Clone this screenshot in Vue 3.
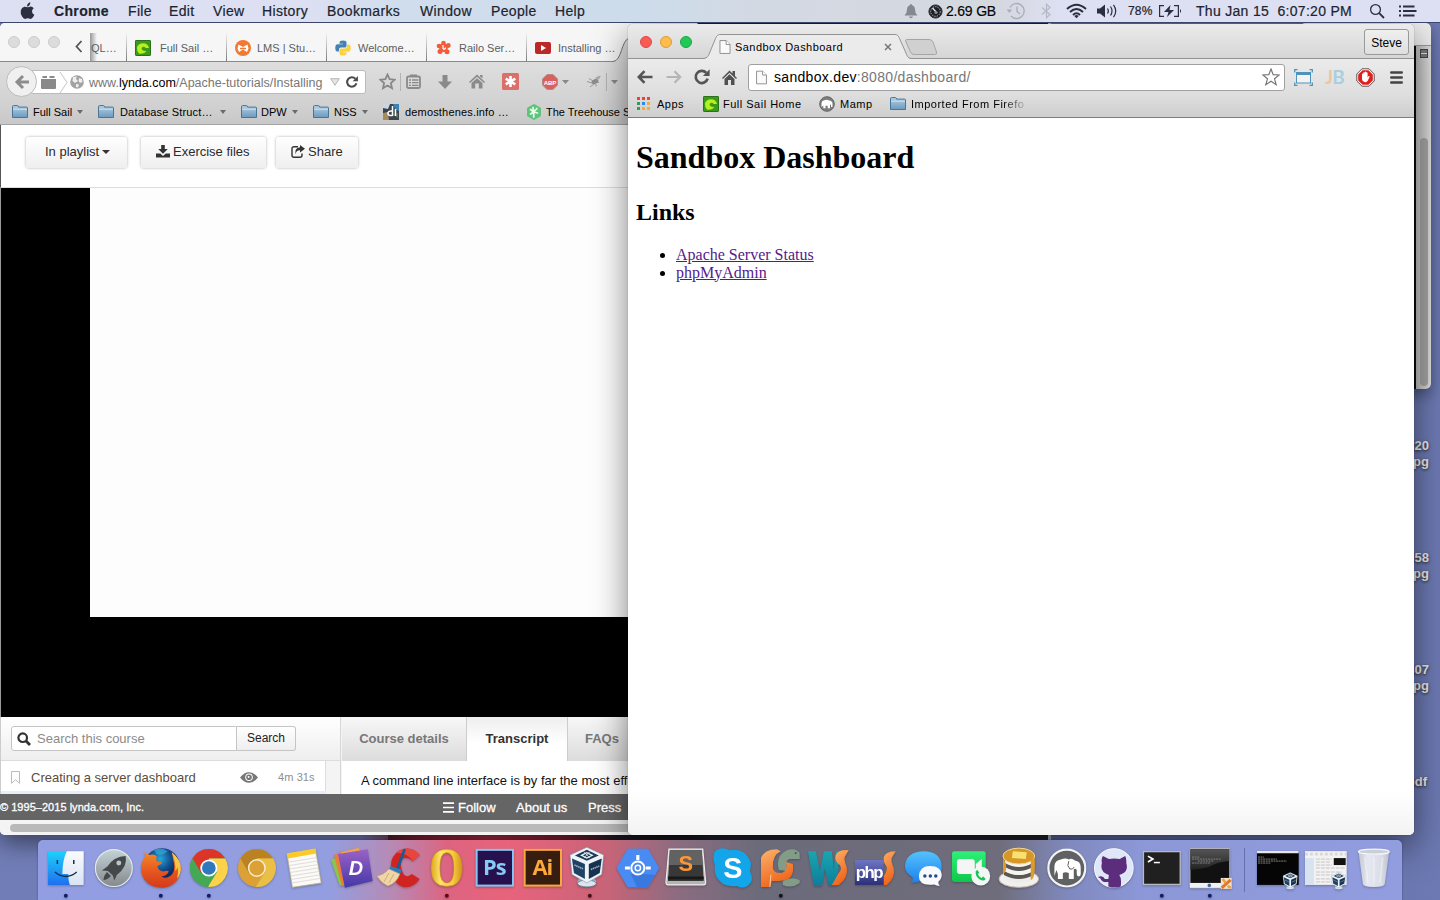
<script setup>
const menus = ['File', 'Edit', 'View', 'History', 'Bookmarks', 'Window', 'People', 'Help']
const files = [
  { id: 1, a: '820', b: 'jpg' },
  { id: 2, a: '958', b: 'jpg' },
  { id: 3, a: '307', b: 'jpg' },
]
</script>

<template>
  <div class="desktop">
    <svg width="0" height="0" class="defs">
      <defs>
        <linearGradient id="gFolder" x2="0" y2="1"><stop offset="0" stop-color="#b5d0e4" /><stop offset="1" stop-color="#6b9abf" /></linearGradient>
        <linearGradient id="gSilver" x2="0" y2="1"><stop offset="0" stop-color="#c3d3d7" /><stop offset="1" stop-color="#85898c" /></linearGradient>
        <linearGradient id="gFinder" x2="0" y2="1"><stop offset="0" stop-color="#1cd2fb" /><stop offset="1" stop-color="#1f6ff0" /></linearGradient>
        <linearGradient id="gFinder2" x2="0" y2="1"><stop offset="0" stop-color="#fafbfd" /><stop offset="1" stop-color="#d9e4f3" /></linearGradient>
        <radialGradient id="gGlobe" cx=".45" cy=".3"><stop offset="0" stop-color="#25a8dc" /><stop offset=".6" stop-color="#14508f" /><stop offset="1" stop-color="#0c2a5c" /></radialGradient>
        <linearGradient id="gFox" x2="0" y2="1"><stop offset="0" stop-color="#f58a25" /><stop offset=".6" stop-color="#e4521f" /><stop offset="1" stop-color="#d33a1b" /></linearGradient>
        <linearGradient id="gDash" x2="0" y2="1"><stop offset="0" stop-color="#9b62c6" /><stop offset="1" stop-color="#4338a8" /></linearGradient>
        <linearGradient id="gOpera"><stop offset="0" stop-color="#e0a520" /><stop offset=".3" stop-color="#fce463" /><stop offset=".7" stop-color="#f6cd3c" /><stop offset="1" stop-color="#d3921a" /></linearGradient>
        <linearGradient id="gOrange" x2=".4" y2="1"><stop offset="0" stop-color="#fbb36c" /><stop offset="1" stop-color="#f0651a" /></linearGradient>
        <linearGradient id="gTeal" x2="0" y2="1"><stop offset="0" stop-color="#1aa5b0" /><stop offset="1" stop-color="#0d7d9c" /></linearGradient>
        <linearGradient id="gMsg" x2="0" y2="1"><stop offset="0" stop-color="#56c2fb" /><stop offset="1" stop-color="#1b82f0" /></linearGradient>
        <linearGradient id="gFace" x2="0" y2="1"><stop offset="0" stop-color="#30f07a" /><stop offset="1" stop-color="#0cc84a" /></linearGradient>
        <linearGradient id="gPhp" x2="0" y2="1"><stop offset="0" stop-color="#6e76c4" /><stop offset="1" stop-color="#2b2f78" /></linearGradient>
        <linearGradient id="gTrash"><stop offset="0" stop-color="#c9ccd6" /><stop offset=".3" stop-color="#eef0f4" /><stop offset=".75" stop-color="#e2e4ea" /><stop offset="1" stop-color="#c0c4cf" /></linearGradient>
        <linearGradient id="gScreen" x2="0" y2="1"><stop offset="0" stop-color="#555" /><stop offset="1" stop-color="#222" /></linearGradient>
        <symbol id="folder" viewBox="0 0 16 14">
          <path d="M.5 12.5V1.6Q.5.6 1.5.6H5.6Q6.4.6 6.6 2.1H14.5Q15.5 2.1 15.5 3V12.5Z" fill="url(#gFolder)" stroke="#4a7394" />
          <path d="M1 4.2H15" stroke="#d5e5f0" stroke-width=".9" />
        </symbol>
        <symbol id="fs" viewBox="0 0 16 16">
          <rect width="16" height="16" rx="1.4" fill="#3a9a1d" /><rect x=".5" y=".5" width="15" height="15" rx="1" fill="none" stroke="#2d7018" />
          <path d="M4 13.600Q1.600 11 2 7.500Q3 3.500 8 3.300Q13 3.500 14 8H10.600Q9.500 6.300 7.600 6.900Q5.600 8.300 7.600 10.200Q9 11.300 11.500 10.900Q9 14.500 4 13.600Z" fill="#b6f01e" />
        </symbol>
        <symbol id="elephant" viewBox="0 0 40 40">
          <circle cx="20" cy="20" r="18.600" fill="#5f6163" stroke="#f3f3f3" stroke-width="2.200" />
          <path d="M7.500 28V18Q8 12.500 14 11.500Q19 9.500 22 11.500Q25 9.500 28 12.500Q34 13 34 20V26Q34 28.500 32 28.500Q30 28.500 30 26V22Q28.500 20 27 21.500V31H22V25Q18.500 23.500 16 25V31H11V26L9.500 22Z" fill="#fff" />
          <path d="M22 13Q19.600 18 23 21Q26 22 27.500 19" fill="none" stroke="#5f6163" stroke-width="1" />
        </symbol>
        <symbol id="mamp" viewBox="0 0 16 16">
          <circle cx="8" cy="8" r="7.300" fill="#7d7d7d" stroke="#666" />
          <path d="M2.500 11V7Q2.800 4.500 5.500 4.300Q8 3.300 10 4.500Q13.300 4.800 13.500 7.500V11H12V8.800L11 8.600V12.300H8.700V9.800H6.500V12.300H4.300V9.500Z" fill="#fff" />
        </symbol>
        <symbol id="vbox" viewBox="0 0 36 42">
          <ellipse cx="18" cy="35.500" rx="9.500" ry="4" fill="#9fb0c4" /><ellipse cx="18" cy="37.600" rx="9.500" ry="3.400" fill="#dce5ee" stroke="#53687f" stroke-width=".7" />
          <path d="M1 9 18 1 35 9 33 28.500 18 37 3 28.500Z" fill="#eef3f8" stroke="#8496ab" stroke-width=".6" />
          <path d="M6 9.300 18 3.600 30 9.300 18 14.800Z" fill="#1d3a58" /><path d="M12.500 9.200 18 6.500 23.500 9.200 18 12Z" fill="none" stroke="#e8eef5" stroke-width="1.300" /><path d="M15 5.500 21 12M21 5.500 15 12" stroke="#dfe8f0" stroke-width=".8" />
          <path d="M3 12.500 16 18V33L5 27Z" fill="#1f4264" /><path d="M33 12.500 20 18V33L31 27Z" fill="#17324e" />
          <path d="M5.500 19 14.500 23M22 23.500 30.500 20" stroke="#9fb2c6" stroke-width="1.600" stroke-dasharray="1.500 .5" />
        </symbol>
        <symbol id="reload" viewBox="0 0 16 16">
          <path d="M13 9.500A5.400 5.400 0 1 1 11.800 4.300" fill="none" stroke="currentColor" stroke-width="2.400" /><path d="M14.800 1.200V7.200H8.800Z" fill="currentColor" />
        </symbol>
        <symbol id="page" viewBox="0 0 12 15">
          <path d="M.6.6H7.200L11.400 4.800V14.400H.6Z" fill="#fafafa" stroke="#8b8b8b" /><path d="M7.200.6V4.800H11.400" fill="#fff" stroke="#8b8b8b" />
        </symbol>
      </defs>
    </svg>

    <header class="menubar">
      <svg width="15" height="18" viewBox="0 0 15 18"><path d="M10.300.3Q10.500 2 9.400 3.200Q8.400 4.500 7 4.400Q6.900 2.900 7.900 1.700Q8.900.5 10.300.3ZM7.600 5.300Q8.200 5.300 9 4.900Q12 3.800 13.700 6.300Q11.900 7.500 12 9.500Q12.100 11.700 14.300 12.700Q13.700 14.200 12.700 15.600Q11.700 17 10.500 17Q9.800 17 9.100 16.600Q7.700 16.100 6.500 16.600Q3.900 18 2.100 14.600Q.2 11.600.8 8.600Q1.500 5.400 4.300 4.800Q5.300 4.700 6.400 5.100Z" fill="#2b2f40" /></svg>
      <b>Chrome</b>
      <span v-for="m in menus" :key="m">{{ m }}</span>
      <svg width="16" height="16" viewBox="0 0 16 16"><path d="M8 1Q9 1 9 2.300Q12 3 12 6.500Q12 10.500 14.500 12.600H1.500Q4 10.500 4 6.500Q4 3 7 2.300Q7 1 8 1ZM6 13.600H10Q9.500 15.200 8 15.200Q6.500 15.200 6 13.600Z" fill="#85888f" /></svg>
      <svg width="15" height="15" viewBox="0 0 15 15"><circle cx="7.500" cy="7.500" r="6.600" fill="#1d1f25" stroke="#33363d" /><circle cx="7.500" cy="7.500" r="4.800" fill="none" stroke="#b9bdc6" stroke-width="1" stroke-dasharray="1.400 1" /><path d="M4.500 4 9 9" stroke="#e6e8ee" stroke-width="1.300" /><circle cx="8" cy="8.500" r="1.600" fill="#858992" /></svg>
      <span class="mem">2.69 GB</span>
      <svg width="20" height="18" viewBox="0 0 20 18" fill="none" stroke="#a9adb7" stroke-width="1.300"><path d="M4 5.500A7.500 7.500 0 1 1 5 14M11 4.500V9.500L14 12" /><path d="M.5 7.500 3.500 11 6 7.500Z" fill="#a9adb7" stroke="none" /></svg>
      <svg width="13" height="16" viewBox="0 0 13 16" fill="none" stroke="#b4b8c4" stroke-width="1.200"><path d="M2 4.500 10 11.500 6.500 14.800V1.200L10 4.500 2 11.500" /></svg>
      <svg width="21" height="16" viewBox="0 0 21 16" fill="none" stroke="#2a2e3f" stroke-width="2"><path d="M1 6Q10.500-2.600 20 6M4 9Q10.500 3 17 9M7 12Q10.500 8.600 14 12" /><path d="M8.300 13 10.500 15.300 12.700 13Q10.500 11.200 8.300 13Z" fill="#2a2e3f" stroke="none" /></svg>
      <svg width="23" height="16" viewBox="0 0 23 16" fill="none" stroke="#2a2e3f" stroke-width="1.200"><path d="M1 5.500H4L9 1.500V14.500L4 10.500H1Z" fill="#2a2e3f" stroke="none" /><path d="M11.500 5.500Q13.300 8 11.500 10.500M14.500 3.500Q17.500 8 14.500 12.500M17.500 1.800Q22 8 17.500 14.200" /></svg>
      <span class="pct">78%</span>
      <svg width="24" height="14" viewBox="0 0 24 14"><path d="M6 1.700H1.600V12.300H6M16 1.700H20.400V12.300H16" fill="none" stroke="#2a2e3f" stroke-width="1.200" /><path d="M22 5Q24.200 7 22 9Z" fill="#2a2e3f" /><path d="M12.500 1 6 8H10.500L9 13 16 6H11.500Z" fill="#2a2e3f" /></svg>
      <span class="date">Thu Jan 15&nbsp; 6:07:20 PM</span>
      <svg width="16" height="16" viewBox="0 0 16 16" fill="none" stroke="#2a2e3f" stroke-width="1.300"><circle cx="6.500" cy="6.500" r="4.900" /><path d="M10.200 10.200 15 15" stroke-width="1.800" /></svg>
      <svg width="19" height="12" viewBox="0 0 19 12" stroke="#2a2e3f" stroke-width="1.800"><path d="M1 1.500H3M1 6H3M1 10.500H3M5 1.500H16.500M5 6H18.500M5 10.500H16.500" /></svg>
    </header>

    <section class="files">
      <p v-for="f in files" :key="f.id">{{ f.a }}<br />{{ f.b }}</p>
      <p class="pdf">pdf</p>
    </section>

    <!-- window peeking out behind Chrome -->
    <section class="backwin">
      <div class="bw-top"></div>
      <div class="bw-body">
        <div class="bw-col"><i class="bw-btn"></i><i class="bw-thumb"></i></div>
      </div>
    </section>

    <section class="firefox">
      <div class="ff-tabs">
        <div class="lights grey"><i></i><i></i><i></i></div>
        <svg class="ff-prev" width="8" height="13" viewBox="0 0 8 13" fill="none" stroke="#555" stroke-width="1.800"><path d="M6.500 1 1.500 6.500 6.500 12" /></svg>
        <div class="ff-tab cut">QL…</div>
        <div class="ff-tab t1"><svg width="16" height="16"><use href="#fs" /></svg>Full Sail …</div>
        <div class="ff-tab t2"><svg width="16" height="16" viewBox="0 0 16 16"><circle cx="8" cy="8" r="8" fill="#f07a32" /><path d="M3.500 4.500 8 7 12.500 4.500 13.500 8.500 12 12 8 9.500 4 12 2.500 8.500Z" fill="#fff" /><path d="M5 8.500H11" stroke="#f07a32" stroke-width="1.400" /></svg>LMS | Stu…</div>
        <div class="ff-tab t3"><svg width="16" height="16" viewBox="0 0 16 16"><path d="M8 .5Q11.500.5 11.500 2.500V6Q11.500 7.500 9.800 7.500H6Q4 7.500 4 9.500V11.500H2.300Q.3 11.500.3 8Q.3 4.300 2.500 4.300H8V3.700H4.500V2.500Q4.500.5 8 .5Z" fill="#4482b4" /><path d="M8 15.500Q4.500 15.500 4.500 13.500V10Q4.500 8.500 6.200 8.500H10Q12 8.500 12 6.500V4.500H13.700Q15.700 4.500 15.700 8Q15.700 11.700 13.500 11.700H8V12.300H11.500V13.500Q11.500 15.500 8 15.500Z" fill="#fbd33f" /></svg>Welcome…</div>
        <div class="ff-tab t4"><svg width="15" height="15" viewBox="0 0 15 15"><g fill="#f25c38"><circle cx="7.500" cy="3" r="2.300" /><circle cx="3" cy="6" r="2.300" /><circle cx="4" cy="11.500" r="2.500" /><circle cx="11" cy="11.700" r="2.500" /><circle cx="12.300" cy="5.500" r="2.400" /><circle cx="7.500" cy="7.700" r="4.400" /></g><path d="M7 5V9M7 9Q9.500 9.500 9.500 7.500" stroke="#fff" fill="none" stroke-width="1.200" /></svg>Railo Ser…</div>
        <div class="ff-tab t5"><svg width="16" height="12" viewBox="0 0 16 12"><rect width="16" height="12" rx="2" fill="#bb2826" /><path d="M6 3 11 6 6 9Z" fill="#fff" /></svg>Installing …</div>
        <svg class="ff-curve" width="24" height="26" viewBox="0 0 24 26"><path d="M0 24.500C9 24 8 4 16 1V0H24V26H0Z" fill="#dfdfdf" /><path d="M0 24.500C9 24 8 4 16 1" fill="none" stroke="#777" /></svg>
      </div>

      <div class="ff-bar">
        <span class="ff-back"><svg width="16" height="16" viewBox="0 0 16 16" fill="none" stroke="#8c8c8c" stroke-width="3"><path d="M9 2 3 8 9 14M3.500 8H15" /></svg></span>
        <div class="ff-url">
          <svg width="15" height="14" viewBox="0 0 15 14"><path d="M0 4H15V13Q15 14 14 14H1Q0 14 0 13ZM1.500 1H6V3H1.500ZM8.500 1H13.500V3H8.500Z" fill="#8a8a8a" /></svg>
          <svg width="9" height="23" viewBox="0 0 9 23" fill="none" stroke="#c4c4c4"><path d="M1 1 8 11.500 1 22" /></svg>
          <svg width="14" height="14" viewBox="0 0 14 14"><circle cx="7" cy="7" r="6.800" fill="#a2a2a2" /><path d="M3 2 7 1.500 6 4 8 6 5 8 2.500 6ZM9 3 12 4 12.500 7 10 8 8.500 6ZM6 9 9 9.500 8 12.500 6 12Z" fill="#efefef" /></svg>
          <span class="ff-addr">www.<b>lynda.com</b>/Apache-tutorials/Installing</span>
          <svg width="10" height="8" viewBox="0 0 10 8"><path d="M.7.700H9.300L5 7.300Z" fill="#e4e4e4" stroke="#b6b6b6" /></svg>
          <svg class="ff-rel" width="14" height="14"><use href="#reload" /></svg>
        </div>
        <svg width="17" height="17" viewBox="0 0 17 17"><path d="M8.500 1.500 10.600 6.200 15.700 6.700 11.900 10.100 13 15.200 8.500 12.500 4 15.200 5.100 10.100 1.300 6.700 6.400 6.200Z" fill="none" stroke="#888" stroke-width="1.800" /></svg>
        <i class="ff-sep"></i>
        <svg width="15" height="15" viewBox="0 0 15 15"><path d="M4 2.500V.5H11V2.500" fill="#8a8a8a" /><rect x="1" y="2.500" width="13" height="11.500" rx="1.500" fill="none" stroke="#8a8a8a" stroke-width="1.800" /><path d="M3 6H5M6 6H12.500M3 8.700H5M6 8.700H12.500M3 11.400H5M6 11.400H12.500" stroke="#8a8a8a" stroke-width="1.300" /></svg>
        <svg width="14" height="14" viewBox="0 0 14 14"><path d="M4.500 0H9.500V6.500H14L7 14 0 6.500H4.500Z" fill="#8a8a8a" /></svg>
        <svg width="16" height="15" viewBox="0 0 16 15"><path d="M0 8 8 .5 16 8 15 9 8 2.800 1 9ZM2.500 9 8 4.200 13.500 9V14.500H9.800V9.500H6.200V14.500H2.500ZM11 1H13.500V4.500L11 2.500Z" fill="#8a8a8a" /></svg>
        <svg width="17" height="17" viewBox="0 0 17 17"><rect width="17" height="17" rx="1.500" fill="#dc6f6a" /><path d="M8.500 3V14M3.700 5.700 13.300 11.300M13.300 5.700 3.700 11.300" stroke="#fff" stroke-width="2.600" /></svg>
        <svg width="16" height="16" viewBox="0 0 16 16"><path d="M5 .5H11L15.500 5V11L11 15.500H5L.5 11V5Z" fill="#d5625d" stroke="#b98885" /><text x="8" y="10.600" text-anchor="middle" class="abp">ABP</text></svg>
        <svg width="7" height="4" viewBox="0 0 7 4"><path d="M0 0H7L3.500 4Z" fill="#888" /></svg>
        <svg width="16" height="13" viewBox="0 0 16 13"><path d="M6 8 1 6.500M7 6 3 3.500M9 5Q11 2 14.500 1.500M10 7 13 7.500M8 9 4 12M10 9 10 11.500" stroke="#9a9a9a" fill="none" /><ellipse cx="9" cy="6.500" rx="3.600" ry="2.300" fill="#8d8d8d" transform="rotate(-30 9 6.500)" /><path d="M9 3 13.500.5 14 3.500 11 4.500Z" fill="#aaa" /></svg>
        <i class="ff-sep"></i>
        <svg width="7" height="4" viewBox="0 0 7 4"><path d="M0 0H7L3.500 4Z" fill="#888" /></svg>
      </div>

      <div class="ff-marks">
        <svg width="16" height="14"><use href="#folder" /></svg><span>Full Sail</span><i class="caret"></i>
        <svg width="16" height="14"><use href="#folder" /></svg><span class="wide">Database Struct…</span><i class="caret"></i>
        <svg width="16" height="14"><use href="#folder" /></svg><span>DPW</span><i class="caret"></i>
        <svg width="16" height="14"><use href="#folder" /></svg><span>NSS</span><i class="caret"></i>
        <svg width="16" height="16" viewBox="0 0 16 16"><path d="M0 0H16V16H0Z" fill="#3a4450" /><path d="M0 0H7L5 5 0 4Z" fill="#c9d6dd" /><path d="M10 0H16V7L12 5Z" fill="#3c83b5" /><path d="M0 9 5 8 6 16H0Z" fill="#a88b5a" /><path d="M9 10 15 9V14Z" fill="#5c6d47" /><path d="M9.500 2V12M9.500 11.500H7Q4.500 11 5 8.500Q6 6.500 9.500 7M12.500 5V12" stroke="#fff" stroke-width="1.500" fill="none" /></svg><span class="wide">demosthenes.info …</span>
        <svg width="14" height="16" viewBox="0 0 14 16"><path d="M7 .5 13.500 4V12L7 15.500.5 12V4Z" fill="#5fc47b" stroke="#5fc47b" stroke-linejoin="round" /><path d="M6.700 8V13M6.700 8 3.500 10M6.700 8 3.500 5.500M6.700 8 6 3.500M6.700 8 10 4.500M6.700 8 10.500 9" stroke="#eafbee" stroke-width="1.700" stroke-linecap="round" /></svg><span>The Treehouse Show</span>
      </div>

      <div class="ly-head">
        <span class="lb b1">In playlist<i class="caret dark"></i></span>
        <span class="lb b2"><svg width="14" height="13" viewBox="0 0 14 13"><path d="M5.200 0H8.800V4H11.800L7 8.800 2.200 4H5.200ZM0 8.500H4.300L7 11 9.700 8.500H14V12.500H0Z" fill="#333" /></svg>Exercise files</span>
        <span class="lb b3"><svg width="14" height="13" viewBox="0 0 14 13"><path d="M7 1.700H3Q1 1.700 1 3.500V10.500Q1 12.200 3 12.200H9Q11 12.200 11 10.500V8.500" fill="none" stroke="#333" stroke-width="1.400" /><path d="M9 0 14 3.800 9 7.500V5.300Q5.500 5 4.300 9.500Q3.500 2.800 9 2.300Z" fill="#333" /></svg>Share</span>
      </div>

      <div class="ly-video"><div class="ly-frame"></div></div>

      <div class="ly-panels">
        <div class="ly-left">
          <div class="ly-search">
            <span class="ly-input"><svg width="14" height="14" viewBox="0 0 14 14" fill="none" stroke="#333" stroke-width="2.200"><circle cx="5.700" cy="5.700" r="4.300" /><path d="M9 9 13 13" stroke-width="2.800" /></svg>Search this course</span><span class="ly-go">Search</span>
          </div>
          <div class="ly-item">
            <svg width="9" height="13" viewBox="0 0 9 13"><path d="M.5.500H8.500V12.300L4.500 8.700.5 12.300Z" fill="#fff" stroke="#bbb" /></svg>
            <span>Creating a server dashboard</span>
            <svg width="18" height="11" viewBox="0 0 18 11"><path d="M0 5.500Q4.500 0 9 .2Q13.500 0 18 5.500Q13.500 11 9 10.800Q4.500 11 0 5.500Z" fill="#777" /><circle cx="9" cy="5.300" r="3.800" fill="#fff" /><circle cx="9" cy="5.300" r="2.800" fill="#777" /><circle cx="8.600" cy="5" r="1" fill="#fff" /></svg>
            <em>4m 31s</em>
          </div>
          <div class="ly-next"></div>
        </div>
        <div class="ly-right">
          <div class="ly-tabs"><span>Course details</span><span class="on">Transcript</span><span>FAQs</span></div>
          <p>A command line interface is by far the most effective</p>
        </div>
      </div>

      <div class="ly-foot">
        <small>© 1995–2015 lynda.com, Inc.</small>
        <svg width="11" height="11" viewBox="0 0 11 11" stroke="#fff" stroke-width="1.700"><path d="M0 1.200H11M0 5.500H11M0 9.800H11" /></svg>
        <span>Follow</span><span>About us</span><span>Press</span>
      </div>
      <div class="ff-scroll"><i></i></div>
    </section>

    <section class="chrome">
      <div class="cr-top">
        <div class="lights"><i></i><i></i><i></i></div>
        <div class="cr-tab">
          <svg class="cr-shape" width="260" height="26" viewBox="0 0 260 26"><path d="M0 25C6 24.500 7 23 8.500 19L14.500 4.500C16 1 17 .5 20 .5H193C196 .5 197 1 198.500 4.500L205 19C206.500 23 207 24.500 212 25V26H0Z" fill="#ebebeb" /><path d="M0 24.500C6 24.500 7 23 8.500 19L14.500 4.500C16 1 17 .5 20 .5H193C196 .5 197 1 198.500 4.500L205 19C206.500 23 207 24.500 212 24.500" fill="none" stroke="#929292" /><path d="M205.500 5.500H228Q231 5.500 232 8L235.500 18Q236.500 20.500 233.500 20.500H213Q210.500 20.500 209.500 18L205 8Q204 5.500 205.500 5.500Z" fill="#d0d0d0" stroke="#a5a5a5" /></svg>
          <svg width="12" height="14"><use href="#page" /></svg>
          <span>Sandbox Dashboard</span>
          <svg width="8" height="8" viewBox="0 0 8 8"><path d="M1 1 7 7M7 1 1 7" stroke="#777" stroke-width="1.500" /></svg>
        </div>
        <span class="cr-user">Steve</span>
      </div>
      <div class="cr-bar">
        <svg width="16" height="14" viewBox="0 0 16 14" fill="none" stroke="#555" stroke-width="2.600"><path d="M7.500 1.200 1.800 7 7.500 12.800M2 7H15.500" /></svg>
        <svg width="16" height="14" viewBox="0 0 16 14" fill="none" stroke="#b5b5b5" stroke-width="2.200"><path d="M8.500 1.200 14.200 7 8.500 12.800M14 7H.5" /></svg>
        <svg class="cr-rel" width="18" height="18"><use href="#reload" /></svg>
        <svg width="15" height="15" viewBox="0 0 15 15"><path d="M0 8 7.500.5 10.500 3.500V1H13V6L15 8 14 9 7.500 2.700 1 9ZM2.500 9 7.500 4.200 12.500 9V15H9V10H6V15H2.500Z" fill="#505050" /></svg>
        <div class="cr-url">
          <svg width="11" height="15"><use href="#page" /></svg>
          <span><b>sandbox.dev</b>:8080/dashboard/</span>
          <svg width="18" height="18" viewBox="0 0 18 18"><path d="M9 1 11.200 6.700 17.200 7 12.500 10.800 14.200 16.700 9 13.300 3.800 16.700 5.500 10.800.8 7 6.800 6.700Z" fill="#fff" stroke="#777" stroke-width="1.200" /></svg>
        </div>
        <svg width="19" height="17" viewBox="0 0 19 17" fill="none" stroke="#4f93ba"><path d="M.7 3.500V.7H3.500M15.500.7H18.300V3.500M.7 13.500V16.300H3.500M15.500 16.300H18.300V13.500" stroke-width="1.300" /><rect x="2.500" y="3.500" width="14" height="10.500" fill="#f3f3f3" /><path d="M2.500 4.700H16.500" stroke-width="2.400" /></svg>
        <span class="jb"><i>J</i>B</span>
        <svg width="19" height="19" viewBox="0 0 19 19"><path d="M6 .8H13L18.200 6V13L13 18.200H6L.8 13V6Z" fill="#fff" stroke="#555" /><path d="M6.500 2.200H12.500L16.800 6.500V12.500L12.500 16.800H6.500L2.200 12.500V6.500Z" fill="#e01f1f" /><path d="M6 9V6Q6.600 5 7.200 6V4.700Q8 3.600 8.700 4.700V4Q9.500 3 10.300 4.300Q11.200 3.800 11.600 5V9.500L12.700 8Q14 7.700 13.500 9L11.600 13Q10.500 14.500 8.500 14Q6 13.500 6 11Z" fill="#fff" /></svg>
        <svg width="13" height="13" viewBox="0 0 13 13" stroke="#444" stroke-width="2.600" stroke-linecap="round"><path d="M1.300 1.500H11.700M1.300 6.500H11.700M1.300 11.500H11.700" /></svg>
      </div>
      <div class="cr-marks">
        <svg width="13" height="13" viewBox="0 0 13 13"><path d="M0 0H3V3H0ZM5 0H8V3H5ZM10 0H13V3H10Z" fill="#e8443a" /><path d="M0 5H3V8H0ZM0 10H3V13H0Z" fill="#2e9e57" /><path d="M5 5H8V8H5Z" fill="#2f87f0" /><path d="M10 5H13V8H10ZM5 10H8V13H5ZM10 10H13V13H10Z" fill="#f5ac36" /></svg>
        <span>Apps</span>
        <svg width="16" height="16"><use href="#fs" /></svg><span>Full Sail Home</span>
        <svg width="16" height="16"><use href="#mamp" /></svg><span>Mamp</span>
        <svg width="16" height="14"><use href="#folder" /></svg><span class="fade">Imported From Firefo</span>
      </div>
      <main class="page">
        <h1>Sandbox Dashboard</h1>
        <h2>Links</h2>
        <ul>
          <li><a>Apache Server Status</a></li>
          <li><a>phpMyAdmin</a></li>
        </ul>
      </main>
    </section>

    <footer class="dock">
      <svg viewBox="0 0 48 60"><path d="M6 11H42V45H6Z" fill="url(#gFinder)" /><path d="M25 11H42V45H28Q26.300 40 26.500 34H20.500Q20.500 20 25 11Z" fill="url(#gFinder2)" /><path d="M15.500 20V24M32 20V24" stroke="#14304e" stroke-width="1.500" /><path d="M13 32Q24 41 35 32" fill="none" stroke="#14304e" stroke-width="1.400" /><circle cx="24" cy="56" r="2" fill="#131f63" /></svg>
      <svg viewBox="0 0 48 60"><circle cx="24" cy="28" r="18.600" fill="url(#gSilver)" stroke="#e3e9ea" stroke-width="1.200" /><path d="M36 16Q38 27 27 35L24.500 40.500 23 35.500 18 31 12 30.500 17.500 26.500Q24 16.500 36 16Z" fill="#45484a" /><circle cx="29" cy="23" r="2.500" fill="#b7c4c8" /><path d="M17 32 21 36Q17.500 40 13.500 40Q13.500 36 17 32Z" fill="#45484a" /></svg>
      <svg viewBox="0 0 48 60"><circle cx="25" cy="26" r="18" fill="url(#gGlobe)" /><path d="M35 12Q45 20 44 30Q42 46 26 48Q8 47.500 4.500 33Q3 23 8 17L7.500 11.500 12.500 15Q17 13.500 20 16.500Q18.500 19 20.500 21.500Q26 21 25 23.500L20.500 26Q21 31 27 31.500Q30 30 32 31.500Q30 36 24.500 36.500Q30 40 35.500 34Q39 29 36.500 20Q36 16 35 12Z" fill="url(#gFox)" /><path d="M35 12Q45 20 44 30Q43 36 40.500 38.500Q42 32 41 27Q40 30 38.500 31Q39.500 22 35 12Z" fill="#fbc743" /><path d="M17 10Q24 7 31 11Q25 16 20 14Z" fill="#3fb4dd" opacity=".6" /><circle cx="24" cy="56" r="2" fill="#131f63" /></svg>
      <svg viewBox="0 0 48 60"><circle cx="24" cy="28" r="19" fill="#44a854" /><path d="M24 28 7.500 18.500A19 19 0 0 1 40.500 18.500H24Z" fill="#dd3428" /><path d="M7.500 18.500 16 33 24 28V18.500Z" fill="#dd3428" /><path d="M24 18.500H40.500A19 19 0 0 1 23 47L32 32.500Z" fill="#fbd249" /><path d="M7.500 18.500 16 32.700 24 46.900A19 19 0 0 1 7.500 18.500Z" fill="#44a854" /><circle cx="24" cy="28" r="8.600" fill="#fff" /><circle cx="24" cy="28" r="6.900" fill="#2f78bd" /><circle cx="24" cy="56" r="2" fill="#131f63" /></svg>
      <svg viewBox="0 0 48 60"><circle cx="24" cy="28" r="19" fill="#dba135" /><path d="M7.500 18.500A19 19 0 0 1 40.500 18.500H24L16 33Z" fill="#b98324" /><path d="M24 18.500H40.500A19 19 0 0 1 23 47L32 32.500Z" fill="#eabf45" /><circle cx="24" cy="28" r="8.300" fill="#dba135" stroke="#fbeccb" stroke-width="1.500" /></svg>
      <svg viewBox="0 0 48 60"><path d="M7 13.500 35.500 8.500 41.500 43 12.500 47.500Z" fill="#fbfaf6" stroke="#bfae88" stroke-width=".8" /><path d="M7 13.500 35.500 8.500 36.500 13.500 8 18.500Z" fill="#fbc928" /><path d="M9 22 37 17.500M9.500 25.500 37.500 21M10 29 38 24.500M10.500 32.500 38.500 28M11 36 39 31.500M11.500 39.500 39.700 35M12 43 40.500 38.500" stroke="#d5d5d5" stroke-width=".8" /></svg>
      <svg viewBox="0 0 48 60"><path d="M3 20 10 17 18 44 12 46Z" fill="#86c84e" /><path d="M6 15 15 11 20 44 14 46Z" fill="#ee7b39" /><path d="M13 12 31 7.500 33 12 18 44Z" fill="#f4a445" /><path d="M10 14 40 9 45 41 17 48Z" fill="url(#gDash)" /><text x="28" y="35" text-anchor="middle" class="dash">D</text></svg>
      <svg viewBox="0 0 48 60"><path d="M44 15Q36 5 24 10Q14 16 15 28Q16 43 27 47Q37 49 44 39L36 34Q29 40 26 30Q23 19 29 18Q33 17 37 21Z" fill="#cf2420" /><path d="M44 15Q36 5 24 10L20 13Q31 12 37 21Z" fill="#e8463c" /><path d="M28.500 10 22 28" stroke="#1a5b94" stroke-width="2.800" stroke-linecap="round" /><path d="M15 26 26 30 24 34.500 13 30Z" fill="#2f7ab8" /><path d="M13 29 24 34Q21 43 12 46Q5 43 1 36Q8 35 13 29Z" fill="#f0d6a6" stroke="#cba777" stroke-width=".6" /><path d="M13 33 8 42M18 34 13 43" stroke="#d2ab77" /></svg>
      <svg viewBox="0 0 48 60"><path fill-rule="evenodd" d="M24 9Q39.500 9 39.500 28Q39.500 46.500 24 46.500Q8 46.500 8 28Q8 9 24 9ZM24 12.500Q17 12.500 17 28Q17 43 24 43Q31 43 31 28Q31 12.500 24 12.500Z" fill="url(#gOpera)" stroke="#c88c19" stroke-width=".6" /><circle cx="24" cy="56" r="2" fill="#5a0a12" /></svg>
      <svg viewBox="0 0 48 60"><rect x="5.700" y="9.700" width="36.600" height="36" fill="#26114e" stroke="#84c5f4" stroke-width="2" /><text x="23.500" y="35" text-anchor="middle" class="ad ps">Ps</text></svg>
      <svg viewBox="0 0 48 60"><rect x="5.700" y="9.700" width="36.600" height="36" fill="#371c10" stroke="#f9a93c" stroke-width="2" /><text x="23.500" y="35" text-anchor="middle" class="ad ai">Ai</text></svg>
      <svg viewBox="0 0 48 60"><use href="#vbox" x="3" y="6" width="36" height="42" /><circle cx="24" cy="56" r="2" fill="#4a1018" /></svg>
      <svg viewBox="0 0 48 60"><path d="M14 9H34L45 28 34 47H14L3 28Z" fill="#4a8bf3" stroke="#4a8bf3" stroke-linejoin="round" /><path d="M30 34 41 35 34 47H23L17 34Z" fill="#2d6cd2" opacity=".6" /><circle cx="24" cy="28" r="6.600" fill="none" stroke="#fff" stroke-width="2" /><circle cx="24" cy="28" r="2.700" fill="none" stroke="#fff" stroke-width="1.500" /><path d="M24 15V20M11 28H16M32 28H37" stroke="#fff" stroke-width="3.200" /></svg>
      <svg viewBox="0 0 48 60"><path d="M7 9H41L44 42Q44 45 42 45H6Q4 45 4 42Z" fill="#b4b4b4" stroke="#ededed" stroke-width="1.200" /><path d="M8 10H40L42 41H6Z" fill="#383838" /><path d="M8 10H40L41 25H7Z" fill="#626262" /><path d="M6 38H42" stroke="#181818" stroke-width="3" /><text x="24" y="31" text-anchor="middle" class="sub">S</text></svg>
      <svg viewBox="0 0 48 60"><path d="M7 10Q14 6 20 10Q36 7 42 22Q42.500 27 41 31Q47 42 37 47Q32 48.500 28 46Q13 48 7 36Q5 30 6 25Q2 15 7 10Z" fill="#12a5ea" /><text x="24" y="38" text-anchor="middle" class="sky">S</text></svg>
      <svg viewBox="0 0 48 60"><path d="M22 30Q18 16 30 10Q39 7 43 13V19H34Q27 19 31 31Z" fill="#839c87" /><path d="M26 41Q35 36 43 40L43 43Q35 49 26 45Z" fill="#839c87" /><path d="M4 47V18Q7 9 20 9L24 11Q15 15 16 28Q17 34 25 33Q32 31 29 22L36 24Q39 41 22 41H15L13 47Z" fill="url(#gOrange)" /><path d="M13 47 14 35" stroke="#f9d0a6" /><circle cx="39" cy="13" r="1" fill="#364a3c" /><circle cx="24" cy="56" r="2" fill="#14141a" /></svg>
      <svg viewBox="0 0 48 60"><path d="M3 11H11L15 31 19 11H27L29 30 31 11H35L32 46H24L20 29 17 46H9Z" fill="url(#gTeal)" /><path d="M44 10Q34 9 31 15Q29 21 35 25Q38 29 34 33L27 45H34Q44 38 42 27Q39 20 40 17Z" fill="url(#gOrange)" /></svg>
      <svg viewBox="0 0 48 60"><path d="M44 11Q34 11 32 17Q31 22 35 27Q36 32 31 37L28 45H35Q44 38 42 28Q39 22 40 18Z" fill="url(#gOrange)" /><rect x="3" y="20" width="29" height="25" fill="url(#gPhp)" /><text x="17" y="38" text-anchor="middle" class="php">php</text></svg>
      <svg viewBox="0 0 48 60"><path d="M23 11Q42 11 42 27Q42 41 22 40Q17 43 11 42.500Q14 40 12.500 37Q5 33 5 26Q6 12 23 11Z" fill="url(#gMsg)" /><path d="M30 26Q42 26 42 36Q41.500 40 38.500 42Q38.500 44 40 46Q36.500 46 34.500 44.500Q19 46.500 19 36Q20 26 30 26Z" fill="#f7f9fc" /><path d="M25 36H25.100M30.500 36H30.600M36 36H36.100" stroke="#224f8b" stroke-width="3.400" stroke-linecap="round" /></svg>
      <svg viewBox="0 0 48 60"><rect x="5" y="11" width="34" height="31" rx="2.500" fill="url(#gFace)" /><rect x="10" y="19" width="18" height="15" rx="3" fill="#f5f5f5" /><path d="M29 24 35 19V34L29 29Z" fill="#f5f5f5" /><circle cx="34" cy="36" r="9.500" fill="#f4f6f5" /><path d="M29 31Q28 36 33 39.500Q37 42 39 39L36.500 36.500 34.500 38Q31.500 36.500 31.300 34L32.500 32.500 30.500 30Z" fill="#13c653" /></svg>
      <svg viewBox="0 0 48 60"><ellipse cx="24" cy="39" rx="20" ry="8.500" fill="#f0f0ee" stroke="#c7b7a2" /><path d="M9 31H39V39Q24 47 9 39Z" fill="#ececea" /><path d="M10 23Q24 31 38 23V28Q24 36 10 28ZM9 31Q24 39 39 31V35Q24 43 9 35Z" fill="#5a5652" /><path d="M10 27Q24 35 38 27V31Q24 39 10 31ZM10 19H38V23Q24 31 10 23Z" fill="#f6f4ef" /><ellipse cx="24" cy="16" rx="16" ry="8" fill="#d69728" stroke="#f4d893" /><path d="M8 18V33Q12 34 11 23M36 20V40Q41 39 40 18" fill="#dc9c2e" /><path d="M18 11 32 12 31 19 17 18Z" fill="#f9e170" /></svg>
      <svg viewBox="0 0 48 60"><use href="#elephant" x="4" y="8" width="40" height="40" /></svg>
      <svg viewBox="0 0 48 60"><circle cx="24" cy="28" r="19.500" fill="#dfe6f8" stroke="#f8faff" /><path d="M13 16 19 19Q24 18 30 19L35.500 16Q37 19 36.500 23Q39 31 32 34L29.500 35Q32 38 31 46.500Q25 49 18.500 46.500V42Q12 43 10.500 38.500L8 37Q13 35 15 39L18.500 39 19 35Q9.500 32 12 23Q11 19 13 16Z" fill="#5c2c7d" /></svg>
      <svg viewBox="0 0 48 60"><rect x="5.500" y="11.500" width="37" height="33" fill="#202020" stroke="#b9bbc3" stroke-width="1.300" /><path d="M10 16 15 19 10 22" fill="none" stroke="#fff" stroke-width="1.700" /><path d="M16 22.500H22" stroke="#fff" stroke-width="1.500" /><circle cx="24" cy="56" r="2" fill="#131f63" /></svg>
      <svg viewBox="0 0 48 60"><rect x="3.500" y="7.500" width="41" height="41" rx="2" fill="#b1b4bd" /><rect x="4.500" y="9" width="39" height="34" fill="#111" /><path d="M4.500 9H43.500V21Q31 22 23 27 14 29 4.500 30Z" fill="url(#gScreen)" /><path d="M4 43H44V48H4Z" fill="#eef0f3" /><path d="M6 17H14M6 19H35M12 21H28M6 23H24" stroke="#8f8f8f" stroke-width=".8" stroke-dasharray="2 .7" /><circle cx="23.500" cy="45.500" r="1.800" fill="#4a6a96" /><rect x="35" y="38" width="11" height="11" fill="#f4e3cf" /><path d="M36 48 45 40" stroke="#e0762b" stroke-width="3" /><path d="M37 39 40 43M42 46 45 48" stroke="#eba23c" stroke-width="2.500" /><circle cx="24" cy="56" r="2" fill="#131f63" /></svg>
      <i class="dk-sep"></i>
      <svg viewBox="0 0 48 60"><rect x="3" y="11" width="42" height="34" fill="#050505" /><path d="M3 12H45" stroke="#e6e6e6" stroke-width="2.500" /><path d="M4 17H10M4 19H23M4 21H33M4 23H17" stroke="#a2a2a2" stroke-width=".8" stroke-dasharray="2 .6" /><use href="#vbox" x="28.500" y="32" width="16" height="18" /></svg>
      <svg viewBox="0 0 48 60"><rect x="3" y="11" width="42" height="34" fill="#f2f2f2" /><path d="M3 14H45" stroke="#d8d8d8" stroke-width="3" stroke-dasharray="3 2" /><path d="M3 18H12V45H3Z" fill="#d8e3f0" /><path d="M14 19H30M14 22H28M14 25H30M14 28H43M14 32H40M14 35H31M14 39H29M14 42H30" stroke="#c6c6c6" stroke-width="1" stroke-dasharray="4 1" /><rect x="32" y="18" width="12" height="7" fill="#111" /><use href="#vbox" x="29" y="32" width="16" height="18" /></svg>
      <svg viewBox="0 0 48 60"><path d="M8.500 11 13 44Q13.500 47 24 47Q34.500 47 35 44L39.500 11Z" fill="url(#gTrash)" opacity=".93" /><ellipse cx="24" cy="11.500" rx="15.500" ry="2.600" fill="#cacdda" stroke="#f4f5f9" stroke-width="1.200" /><path d="M15 17 18 43M33 17 30 43M24 17V43" stroke="#fff" opacity=".35" stroke-width="1.500" /></svg>
    </footer>
  </div>
</template>

<style>
body { margin: 0; overflow: hidden; }
</style>

<style scoped>
.desktop {
  position: relative; width: 1440px; height: 900px; overflow: hidden; box-sizing: border-box;
  font-family: "Liberation Sans", Arial, sans-serif; color: #000;
  background:
    radial-gradient(ellipse 130px 60px at 490px 838px, #a82c42, #7a1f31 60%, transparent) 0 0 / 100% 100%,
    linear-gradient(90deg, #717db6 0 388px, #202029 388px 1048px, #b0b3bc 1048px 1051px, #5a669e 1051px, #6c79b2 1440px);
}
.desktop svg { display: block; flex: none; }
.desktop .defs { position: absolute; }
.menubar {
  position: relative; z-index: 2;
  display: grid; align-items: center; height: 22px; padding-left: 20px; border-bottom: 1px solid #3c456c;
  grid-template-columns: 34px 74px 41px 44px 49px 65px 93px 71px 64px 348px 25px 18px 60px 34px 26px 30px 32px 30px 38px 173px 29px 42px;
  background: linear-gradient(90deg, #dde0f2 0, #dde0f2 300px, #d0dded 400px, #cddceb 640px, #d3d9e3 760px, #d5d8df 1000px, #dde0f2 1060px);
  font-size: 14px; letter-spacing: .35px; color: #20242f; white-space: nowrap; -webkit-text-stroke: .2px #20242f;
}
.menubar .mem { letter-spacing: -.2px; color: #000; }
.menubar .pct { font-size: 12px; letter-spacing: .2px; }
.menubar .date { letter-spacing: .3px; }

.files { position: absolute; right: 11px; top: 438px; width: 40px; text-align: right; color: #e9e9ea; font: bold 13px/16px "Liberation Sans", sans-serif; text-shadow: 0 1px 3px #222; }
.files p { margin: 0 0 80px; }
.files .pdf { padding-right: 2px; }

.backwin { position: absolute; left: 1300px; top: 23px; width: 131px; height: 366px; border-radius: 5px; overflow: hidden; background: #0a0a10; box-shadow: 0 6px 14px rgba(0, 0, 0, .35); }
.bw-top { height: 22px; background: #ededed; border-bottom: 1px solid #999; }
.bw-body { height: 343px; display: flex; justify-content: flex-end; }
.bw-col { width: 15px; background: linear-gradient(90deg, #bdbdbd, #dedede); display: flex; flex-direction: column; align-items: center; }
.bw-btn { width: 8px; height: 9px; margin-top: 3px; background: linear-gradient(#777 3px, #ddd 3px 4px, #777 4px); border: 1px solid #444; box-sizing: border-box; }
.bw-thumb { width: 8px; height: 248px; border-radius: 4px; background: #a3a3a3; margin-top: 80px; }

.firefox { position: absolute; left: 0; top: 23px; width: 700px; height: 812px; border-radius: 5px; overflow: hidden; background: #fff; display: flex; flex-direction: column; box-shadow: 0 8px 24px rgba(0, 0, 0, .5); font-size: 11px; white-space: nowrap; }
.firefox > div { flex: none; }
.ff-tabs { height: 38px; display: flex; align-items: flex-start; background: #f6f6f6; border-bottom: 1px solid #8a8a8a; color: #5d5d5d; }
.lights { display: flex; gap: 8px; }
.lights i { width: 12px; height: 12px; border-radius: 50%; box-sizing: border-box; }
.lights i:nth-child(1) { background: #fb5b56; border: 1px solid #e04744; }
.lights i:nth-child(2) { background: #fdbc4b; border: 1px solid #dd9c35; }
.lights i:nth-child(3) { background: #22c956; border: 1px solid #1aa743; }
.lights.grey { margin: 13px 0 0 8px; }
.lights.grey i { background: #dcdcdc; border-color: #cdcdcd; }
.ff-prev { margin: 17px 0 0 15px; }
.ff-tab { box-sizing: border-box; width: 100px; height: 28px; margin-top: 10px; padding: 1px 0 0 8px; border-left: 1px solid; border-image: linear-gradient(transparent, #777) 1; display: flex; align-items: center; gap: 7px; }
.ff-tab.cut { width: 36px; padding: 1px 0 0 1px; margin-left: 7px; border: 0; background: linear-gradient(90deg, rgba(0, 0, 0, .38), transparent 7px); }
.ff-tab.t1 { gap: 9px; }
.ff-tab.t2 { gap: 6px; }
.ff-tab.t4 { padding-left: 9px; gap: 8px; }
.ff-curve { margin: 14px 0 0 -13px; }
.ff-bar {
  display: grid; align-items: center; height: 37px; padding: 1px 0 0 7px;
  grid-template-columns: 23px 349px 21px 6px 32px 31px 33px 40px 20px 24px 20px 5px 10px;
  background: linear-gradient(#dedede, #d3d3d3);
}
.ff-back { position: relative; width: 31px; height: 31px; border-radius: 50%; border: 1px solid #bcbcbc; margin-left: -1px; background: #f0f0f0; display: flex; align-items: center; justify-content: center; box-sizing: border-box; }
.ff-url { width: 336px; height: 24px; box-sizing: border-box; border: 1px solid #bbb; border-radius: 3px; background: #fff; display: grid; align-items: center; padding-left: 10px; grid-template-columns: 18px 11px 19px 241px 15px 16px; }
.ff-addr { font-size: 12.500px; color: #777; padding-top: 1px; }
.ff-addr b { font-weight: 400; color: #000; }
.ff-rel { color: #4c4c4c; }
.ff-sep { width: 1px; height: 18px; background: #b3b3b3; }
.abp { font: bold 6px "Liberation Sans", sans-serif; fill: #fff; }
.ff-marks {
  display: grid; align-items: center; height: 22px; padding: 1px 0 1px 12px; border-bottom: 1px solid #a4a4a4;
  grid-template-columns: 21px 44px 21px 22px 100px 21px 20px 31px 21px 21px 28px 21px 22px 122px 19px 140px;
  background: linear-gradient(#d3d3d3, #c8c8c8);
}
.wide { letter-spacing: .17px; }
.caret { width: 0; height: 0; border: 3.500px solid transparent; border-top: 4px solid #6b6b6b; border-bottom: 0; }
.caret.dark { border-width: 4px 4px 0; border-top-color: #333; }
.ly-head { height: 62px; border-bottom: 1px solid #ddd; border-left: 1px solid #555; display: flex; align-items: flex-start; background: #fff; font-size: 13px; color: #2b2b2b; }
.lb { height: 31px; margin-top: 12px; box-sizing: border-box; display: flex; align-items: center; padding-bottom: 2px; border-radius: 3px; background: linear-gradient(#fefefe, #efefef); box-shadow: 0 0 3px rgba(0, 0, 0, .33); }
.b1 { width: 101px; margin-left: 25px; padding-left: 19px; gap: 3px; }
.b2 { width: 125px; margin-left: 14px; padding-left: 15px; gap: 3px; }
.b3 { width: 82px; margin-left: 10px; padding-left: 15px; gap: 3px; }
.ly-video { height: 529px; padding-left: 89px; background: #000; border-left: 1px solid #999; }
.ly-frame { height: 429px; background: #fdfdfd; }
.ly-panels { height: 77px; display: flex; overflow: hidden; background: #f4f4f4; font-size: 13px; }
.ly-left { width: 341px; border-right: 1px solid #d6d6d6; border-left: 1px solid #ccc; box-sizing: border-box; }
.ly-search { height: 43px; display: flex; box-sizing: content-box; border-bottom: 1px solid #dcdcdc; background: linear-gradient(#fff, #eee); }
.ly-input { margin: 9px 0 0 10px; width: 226px; height: 25px; box-sizing: border-box; border: 1px solid #c5c5c5; border-radius: 3px 0 0 3px; background: #fff; display: flex; align-items: center; gap: 6px; padding-left: 5px; color: #8b8b8b; }
.ly-go { margin-top: 9px; width: 59px; height: 25px; box-sizing: border-box; border: 1px solid #c5c5c5; border-left: 0; border-radius: 0 3px 3px 0; background: linear-gradient(#fff, #eee); text-align: center; line-height: 22px; font-size: 12px; color: #222; }
.ly-item { width: 325px; height: 30px; background: #fff; border-right: 1px solid #ddd; display: grid; align-items: center; grid-template-columns: 20px 209px 38px 57px; padding: 2px 0 0 10px; box-sizing: border-box; color: #5b4c3b; }
.ly-item em { font-style: normal; font-size: 11px; color: #8e8e8e; letter-spacing: .1px; }
.ly-next { width: 325px; height: 4px; background: #e6eefb; }
.ly-right { flex: 1; margin-left: 1px; background: #fff; }
.ly-tabs { height: 44px; display: flex; font-weight: bold; color: #777; line-height: 43px; }
.ly-tabs span { box-sizing: border-box; width: 125px; text-align: center; border-right: 1px solid #ccc; background: linear-gradient(#f7f7f7, #dcdcdc); }
.ly-tabs .on { width: 101px; color: #333; background: linear-gradient(#eee, #fff 60%); }
.ly-tabs span:last-child { text-align: left; padding-left: 17px; }
.ly-right p { margin: 0; padding: 12px 0 0 19px; font-size: 13px; line-height: 16px; color: #111; }
.ly-foot { height: 26px; background: #656565; color: #fff; display: grid; align-items: center; grid-template-columns: 443px 15px 58px 72px 60px; font-size: 13px; -webkit-text-stroke: .3px #fff; }
.ly-foot small { font-size: 11px; letter-spacing: .03px; }
.ff-scroll { height: 15px; background: #f4f4f4; padding: 4px 0 0 10px; box-sizing: border-box; }
.ff-scroll i { display: block; height: 8px; border-radius: 4px; background: #b9b9b9; }

.chrome { position: absolute; left: 628px; top: 24px; width: 786px; height: 811px; border-radius: 5px; overflow: hidden; background: #fff; display: flex; flex-direction: column; box-shadow: 0 12px 34px rgba(0, 0, 0, .5), 0 0 1px rgba(0, 0, 0, .6); white-space: nowrap; }
.cr-top { height: 34px; display: flex; background: linear-gradient(#ebebeb, #d6d6d6); border-bottom: 1px solid #929292; }
.cr-top .lights { margin: 12px 0 0 12px; }
.cr-tab { position: relative; height: 25px; margin: 10px 0 0 9px; width: 260px; display: flex; align-items: center; padding-left: 18px; box-sizing: border-box; font-size: 11px; letter-spacing: .46px; }
.cr-tab > * { position: relative; }
.cr-tab .cr-shape { position: absolute; left: 0; top: 0; }
.cr-tab span { width: 149px; margin-left: 4px; }
.cr-user { margin: 5px 5px 0 auto; width: 45px; height: 26px; box-sizing: border-box; border: 1px solid #999; border-radius: 3px; background: linear-gradient(#efefef, #dfdfdf); font-size: 12px; line-height: 26px; text-align: center; }
.cr-bar { display: grid; align-items: center; height: 36px; padding-left: 9px; grid-template-columns: 29px 27px 29px 26px 546px 31px 31px 34px 20px; background: linear-gradient(#ebebeb, #dedede); }
.cr-rel { color: #555; }
.cr-url { width: 537px; height: 27px; box-sizing: border-box; border: 1px solid #a0a0a0; border-radius: 3px; background: #fff; display: grid; align-items: center; grid-template-columns: 18px 488px 20px; padding-left: 7px; font-size: 14px; letter-spacing: .31px; color: #777; }
.cr-url b { font-weight: 400; color: #000; }
.jb { font: bold 19px/20px Lato, sans-serif; color: #a9cfe0; letter-spacing: -1px; }
.jb i { font-style: normal; color: #ebc7a2; }
.cr-marks { display: grid; align-items: center; height: 22px; padding-left: 9px; border-bottom: 1px solid #7d7d7d; box-sizing: border-box; height: 23px; padding-bottom: 5px; grid-template-columns: 20px 46px 20px 96px 21px 50px 21px 130px; background: linear-gradient(#dedede, #cecece); font-size: 11px; letter-spacing: .5px; }
.fade { -webkit-mask-image: linear-gradient(90deg, #000 92px, transparent 118px); mask-image: linear-gradient(90deg, #000 92px, transparent 118px); }
.page { flex: 1; padding: .1px 8px; font: 16px/18px "Liberation Serif", "Times New Roman", serif; background: linear-gradient(#fff calc(100% - 45px), #f3f3f3); }
.page h1 { font-size: 32px; line-height: 37px; margin: 21px 0 22.500px; }
.page h2 { font-size: 24px; line-height: 27px; margin: 0 0 20px; }
.page ul { margin: 0; padding-left: 40px; }
.page a { color: #551a8b; text-decoration: underline; }

.dock {
  position: absolute; left: 38px; top: 840px; width: 1364px; height: 60px; display: flex; padding-left: 4px; box-sizing: border-box; border-radius: 5px 5px 0 0; box-shadow: 0 0 2px rgba(20, 24, 60, .5);
  background: linear-gradient(90deg, #929ee2 0, #939ee0 290px, #b48cb8 350px, #dd6480 410px, #e8637c 470px, #c76478 570px, #8b6c80 640px, #6c6b7b 720px, #6f6d7b 960px, #8089bd 1030px, #8b97d6 1100px, #929de0 1364px);
}
.dock > svg { width: 47.670px; height: 60px; filter: drop-shadow(0 1px 1px rgba(0, 0, 0, .25)); }
.dk-sep { flex: none; width: 1px; height: 44px; margin: 8px 9px 0 11px; background: #6570ad; }
.ad { font: bold 22px "Open Sans", sans-serif; letter-spacing: -1px; }
.ps { fill: #86cbf5; }
.ai { fill: #fba93b; }
.php { font: bold 17px "Liberation Sans", sans-serif; letter-spacing: -1.500px; fill: #fff; }
.dash { font: bold italic 20px "Liberation Sans", sans-serif; fill: #fff; }
.sub { font: bold 22px "Liberation Sans", sans-serif; fill: #ff9635; }
.sky { font: bold 29px "Liberation Sans", sans-serif; fill: #fff; }
</style>
